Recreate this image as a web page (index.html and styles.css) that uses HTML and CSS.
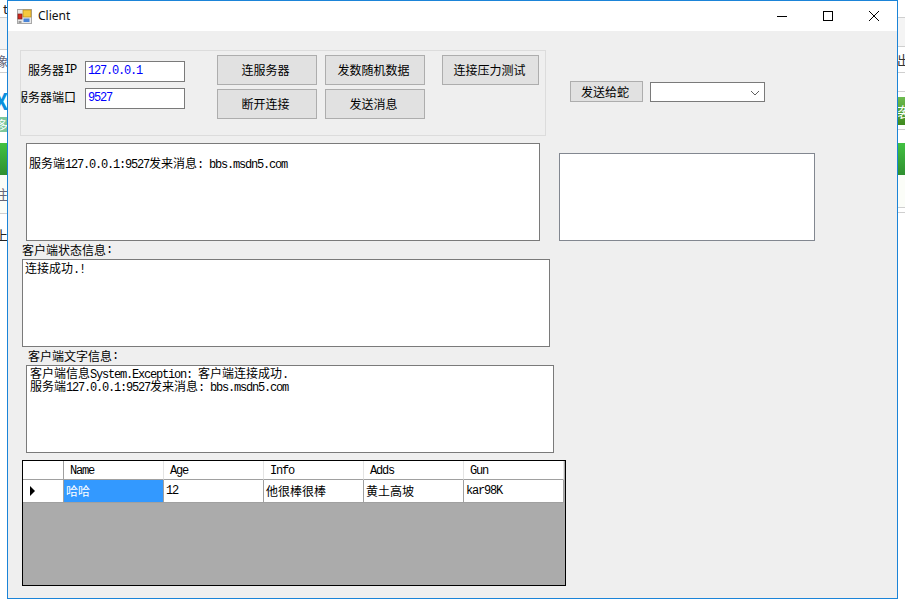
FILE: index.html
```html
<!DOCTYPE html>
<html lang="zh">
<head>
<meta charset="utf-8">
<title>Client</title>
<link rel="stylesheet" href="styles.css">
</head>
<body>
<div class="desktop">
  <div class="strip strip-left">
    <div class="sl h17 dark-char">t</div>
    <div class="sl h33 tint line-top line-bottom"></div>
    <div class="sl h22 grey-char">像</div>
    <div class="sl h16 line-top"></div>
    <div class="sl h24 blue-char">X</div>
    <div class="sl h5"></div>
    <div class="sl h15 mint">多</div>
    <div class="sl h11"></div>
    <div class="sl h32 green"></div>
    <div class="sl h38 pale grey-char">注</div>
    <div class="sl h15 line-top"></div>
    <div class="sl h14 dark-char">上</div>
  </div>
  <div class="strip strip-right">
    <div class="sl h17"></div>
    <div class="sl h30 tint line-top line-bottom"></div>
    <div class="sl h25 dark-char-r">出</div>
    <div class="sl h20 line-top line-bottom"></div>
    <div class="sl h5"></div>
    <div class="sl h28 leaf">袭</div>
    <div class="sl h4"></div>
    <div class="sl h14 line-top"></div>
    <div class="sl h32 green"></div>
    <div class="sl h32 pale"></div>
    <div class="sl h6 line-top line-bottom"></div>
  </div>

  <div class="window">
    <header class="titlebar">
      <svg class="app-icon" width="15" height="15" viewBox="0 0 15 15">
        <rect x="0.5" y="0.5" width="14" height="14" fill="#e8e8e8" stroke="#a8a8a8"/>
        <rect x="6" y="1" width="8" height="7" fill="#f5c93e" stroke="#b88a1c" stroke-width="0.7"/>
        <rect x="1" y="5" width="4" height="5" fill="#d3271e" stroke="#80201a" stroke-width="0.7"/>
        <rect x="6.5" y="9.5" width="6" height="3.5" fill="#4a84d6"/>
        <rect x="1.5" y="12" width="3" height="2" fill="#9a9a9a"/>
      </svg>
      <span class="title-text">Client</span>
      <div class="win-controls">
        <svg class="win-btn" width="46" height="30" viewBox="0 0 46 30"><path d="M18 15.5h10" stroke="#000" fill="none"/></svg>
        <svg class="win-btn" width="46" height="30" viewBox="0 0 46 30"><rect x="18.5" y="10.5" width="9" height="9" stroke="#000" fill="none"/></svg>
        <svg class="win-btn" width="46" height="30" viewBox="0 0 46 30"><path d="M18 10l10 10M28 10l-10 10" stroke="#000" fill="none"/></svg>
      </div>
    </header>

    <main class="client">
      <section class="top">
        <div class="panel">
          <div class="fields">
            <div class="field">
              <div class="field-label">服务器<span class="m">IP</span></div>
              <div class="input m-all">127.0.0.1</div>
            </div>
            <div class="field">
              <div class="field-label">服务器端口</div>
              <div class="input m-all">9527</div>
            </div>
          </div>
          <div class="btn-grid">
            <div class="btn">连服务器</div>
            <div class="btn">发数随机数据</div>
            <div class="btn">断开连接</div>
            <div class="btn">发送消息</div>
          </div>
          <div class="btn btn-wide">连接压力测试</div>
        </div>
        <div class="send-row">
          <div class="btn btn-small">发送给蛇</div>
          <div class="combo">
            <svg width="10" height="6" viewBox="0 0 10 6"><path d="M1 1l4 4 4-4" stroke="#606060" fill="none"/></svg>
          </div>
        </div>
      </section>

      <section class="main">
        <div class="left">
          <div class="box box-server">服务端<span class="m">127.0.0.1:9527</span>发来消息<span class="m">: bbs.msdn5.com</span></div>
          <div class="caption caption-status">客户端状态信息<span class="m">:</span></div>
          <div class="box box-status">连接成功<span class="m">.!</span></div>
          <div class="caption caption-text">客户端文字信息<span class="m">:</span></div>
          <div class="box box-log">
            <div class="log-line">客户端信息<span class="m">System.Exception: </span>客户端连接成功<span class="m">.</span></div>
            <div class="log-line">服务端<span class="m">127.0.0.1:9527</span>发来消息<span class="m">: bbs.msdn5.com</span></div>
          </div>
          <div class="grid">
            <div class="grid-head">
              <div class="row-head"></div>
              <div class="col-head m-all">Name</div>
              <div class="col-head m-all">Age</div>
              <div class="col-head m-all">Info</div>
              <div class="col-head m-all">Adds</div>
              <div class="col-head m-all">Gun</div>
            </div>
            <div class="grid-row">
              <div class="row-head row-current"><span class="arrow"></span></div>
              <div class="cell cell-selected">哈哈</div>
              <div class="cell m-all">12</div>
              <div class="cell">他很棒很棒</div>
              <div class="cell">黄土高坡</div>
              <div class="cell m-all">kar98K</div>
            </div>
          </div>
        </div>
        <div class="right">
          <div class="box box-side"></div>
        </div>
      </section>
    </main>
  </div>
</div>
</body>
</html>
```
FILE: styles.css
```css
* { box-sizing: border-box; }
html, body { margin: 0; padding: 0; }
body {
  background: #fff;
  color: #000;
  font: 12px/14px "Noto Sans CJK SC", "Liberation Sans", sans-serif;
}
.m, .m-all {
  font-family: "Liberation Mono", "Noto Sans CJK SC", monospace;
  letter-spacing: -1.2px;
}

.desktop {
  position: relative;
  width: 905px;
  height: 606px;
  overflow: hidden;
  display: flex;
  justify-content: space-between;
}

/* Slivers of the page behind the window */
.strip { width: 8px; display: flex; flex-direction: column; overflow: hidden; }
.sl { flex: none; overflow: hidden; display: flex; align-items: center; justify-content: flex-end; white-space: nowrap; }
.strip-right .sl { justify-content: flex-start; }
.h4 { height: 4px; } .h5 { height: 5px; } .h6 { height: 6px; } .h11 { height: 11px; }
.h14 { height: 14px; } .h15 { height: 15px; } .h16 { height: 16px; } .h17 { height: 17px; }
.h20 { height: 20px; } .h22 { height: 22px; } .h24 { height: 24px; } .h25 { height: 25px; }
.h28 { height: 28px; } .h30 { height: 30px; } .h32 { height: 32px; } .h33 { height: 33px; } .h38 { height: 38px; }
.tint { background: #f4f4f4; }
.pale { background: #fbfdf8; }
.line-top { border-top: 1px solid #cfcfcf; }
.line-bottom { border-bottom: 1px solid #cfcfcf; }
.dark-char { color: #222; font-size: 13px; }
.dark-char-r { color: #333; font-size: 13px; }
.grey-char { color: #667; font-size: 13px; }
.blue-char { color: #0a8fdc; font-size: 22px; line-height: 22px; font-weight: 700; }
.mint { background: #7dc79b; color: #fff; font-size: 12px; line-height: 14px; }
.leaf { background: linear-gradient(#6dbb4f, #3e8a1e); color: #fff; font-size: 14px; }
.green { background: linear-gradient(#42c142, #2f8f30); }

/* Window */
.window {
  position: absolute;
  left: 7px;
  top: 0;
  width: 891px;
  height: 599px;
  border: 1px solid #1b84d8;
  display: flex;
  flex-direction: column;
  background: #efefef;
}
.titlebar {
  flex: none;
  height: 30px;
  background: #fff;
  display: flex;
  align-items: center;
  padding-left: 9px;
}
.app-icon { flex: none; }
.title-text {
  margin-left: 6px;
  font-family: "Noto Sans", sans-serif;
  font-size: 12px;
  color: #111;
}
.win-controls { margin-left: auto; display: flex; }
.win-btn { display: block; }

.client { flex: 1; min-height: 0; display: flex; flex-direction: column; }

/* Top */
.top { flex: none; height: 112px; display: flex; align-items: flex-start; }
.panel {
  flex: none;
  width: 526px;
  height: 86px;
  margin: 19px 0 0 12px;
  border: 1px solid #dcdcdc;
  overflow: hidden;
  display: flex;
  align-items: flex-start;
}
.fields { flex: none; width: 164px; padding-top: 10px; display: flex; flex-direction: column; gap: 6px; }
.field { display: flex; align-items: center; gap: 9px; height: 21px; }
.field-label { flex: none; width: 55px; display: flex; justify-content: flex-end; white-space: nowrap; padding-bottom: 3px; }
.input {
  flex: none;
  width: 100px;
  height: 21px;
  border: 1px solid #7a7a7a;
  background: #fff;
  color: #0000ff;
  padding: 2px 0 0 2px;
}
.btn-grid {
  flex: none;
  margin: 4px 0 0 32px;
  display: grid;
  grid-template-columns: 100px 100px;
  grid-auto-rows: 30px;
  gap: 4px 8px;
}
.btn {
  background: #e1e1e1;
  border: 1px solid #adadad;
  display: flex;
  align-items: center;
  justify-content: center;
  padding-right: 3px;
  white-space: nowrap;
}
.btn-wide { flex: none; width: 97px; height: 30px; margin: 4px 0 0 17px; padding-right: 2px; }
.send-row { flex: none; margin: 50px 0 0 24px; display: flex; align-items: flex-start; gap: 7px; }
.btn-small { width: 73px; height: 21px; }
.combo {
  width: 115px;
  height: 20px;
  margin-top: 1px;
  background: #fff;
  border: 1px solid #7a7a7a;
  display: flex;
  align-items: center;
  justify-content: flex-end;
  padding: 1px 4px 0 0;
}
.combo svg { display: block; }

/* Main */
.main { flex: 1; min-height: 0; display: flex; align-items: flex-start; }
.left { flex: none; width: 551px; }
.right { flex: none; }
.box { background: #fff; border: 1px solid #7a7a7a; }
.box-server { width: 514px; height: 98px; margin-left: 18px; padding: 12px 0 0 2px; }
.caption { height: 18px; display: flex; align-items: center; white-space: nowrap; }
.caption-status { margin-left: 14px; }
.caption-text { margin-left: 20px; }
.box-status { width: 528px; height: 88px; margin-left: 14px; padding: 1px 0 0 2px; }
.box-log { width: 528px; height: 88px; margin-left: 18px; padding: 0 0 0 3px; }
.log-line { height: 12.5px; white-space: nowrap; }
.box-side { width: 256px; height: 88px; margin-top: 10px; border-color: #828790; }

/* Data grid */
.grid {
  width: 544px;
  height: 126px;
  margin: 7px 0 0 14px;
  border: 1px solid #000;
  background: #ababab;
}
.grid-head { display: flex; height: 19px; }
.grid-row { display: flex; height: 23px; }
.row-head {
  flex: none;
  width: 41px;
  background: #fff;
  border-right: 1px solid #a0a0a0;
  border-bottom: 1px solid #a0a0a0;
}
.row-current { display: flex; align-items: center; padding-left: 7px; }
.arrow {
  width: 0;
  height: 0;
  border-left: 5px solid #000;
  border-top: 5px solid transparent;
  border-bottom: 5px solid transparent;
}
.col-head {
  flex: none;
  width: 100px;
  background: #fff;
  border-right: 1px solid #e4e4e4;
  border-bottom: 1px solid #a0a0a0;
  padding: 1px 0 0 6px;
  display: flex;
  align-items: center;
}
.cell {
  flex: none;
  width: 100px;
  background: #fff;
  border-right: 1px solid #a0a0a0;
  border-bottom: 1px solid #a0a0a0;
  padding-left: 2px;
  display: flex;
  align-items: center;
  white-space: nowrap;
}
.cell-selected { background: #3399ff; color: #fff; }
```
